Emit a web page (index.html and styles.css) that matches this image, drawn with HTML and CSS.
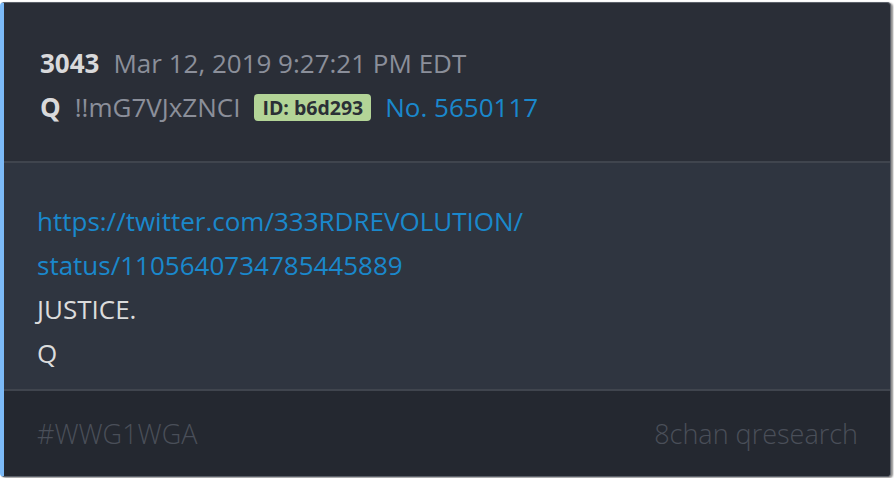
FILE: index.html
```html
<!DOCTYPE html>
<html lang="en">
<head>
    <meta charset="UTF-8">
    <meta name="viewport" content="width=device-width, initial-scale=1.0">
    <title>3043</title>
    <link rel="stylesheet" href="styles.css">
</head>
<body>
    <div class="post">
        <div class="post-header">
            <div class="meta-row">
                <span class="post-num">3043</span>
                <span class="post-date">Mar 12, 2019 9:27:21 PM EDT</span>
            </div>
            <div class="meta-row">
                <span class="author">Q</span>
                <span class="trip">!!mG7VJxZNCI</span>
                <span class="id-badge">ID: b6d293</span>
                <a href="#" class="post-link">No. 5650117</a>
            </div>
        </div>

        <div class="post-body">
            <a href="#" class="body-link">https://twitter.com/333RDREVOLUTION/<br>status/1105640734785445889</a>
            <p>JUSTICE.</p>
            <p>Q</p>
        </div>

        <div class="post-footer">
            <span>#WWG1WGA</span>
            <span>8chan qresearch</span>
        </div>
    </div>
</body>
</html>
```

FILE: styles.css
```css
* {
    margin: 0;
    padding: 0;
    box-sizing: border-box;
}

body {
    font-family: 'Open Sans', 'Noto Sans', sans-serif;
    background: #ffffff;
}

.post {
    margin: 2px 3px 1px 0;
    height: 475px;
    display: flex;
    flex-direction: column;
    background: #2a2e37;
    border: 1px solid #5c616a;
    border-left: 4px solid #7cbaf7;
    border-radius: 4px;
    box-shadow: 2px 1px 2px rgba(0, 0, 0, 0.45);
    overflow: hidden;
}

.post-header {
    padding: 38px 36px 32px;
    border-bottom: 2px solid #40454e;
}

.meta-row {
    display: flex;
    align-items: center;
    gap: 14px;
    height: 44px;
    font-size: 26px;
}

.post-num,
.author {
    color: #d9d9db;
    font-weight: bold;
}

.post-date,
.trip {
    color: #8b8f9a;
}

.id-badge {
    background: #b3d497;
    color: #2b2f36;
    font-size: 19.5px;
    font-weight: bold;
    padding: 0 8px;
    border-radius: 4px;
    line-height: 27px;
}

.post-link {
    color: #1a88cc;
    text-decoration: none;
}

.post-body {
    flex: 1;
    background: #2f3540;
    padding: 36px 33px 0;
    font-size: 26px;
    line-height: 44px;
    color: #dcdcdc;
    border-bottom: 2px solid #40454e;
}

.body-link {
    color: #1a88cc;
    text-decoration: none;
}

.post-footer {
    height: 85px;
    background: #242830;
    display: flex;
    align-items: center;
    justify-content: space-between;
    padding: 0 32px 0 33px;
    font-size: 27px;
    font-weight: 300;
    color: #4a4f59;
}
```
